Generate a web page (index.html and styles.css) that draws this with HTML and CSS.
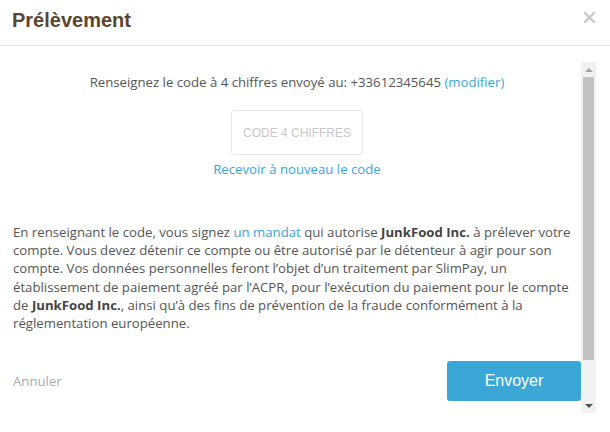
FILE: index.html
```html
<!DOCTYPE html>
<html lang="fr">
<head>
<meta charset="utf-8">
<title>Prélèvement</title>
<link rel="stylesheet" href="styles.css">
</head>
<body>
<div class="modal">
  <div class="header">
    <h1 class="title">Prélèvement</h1>
    <svg class="close" width="11" height="11" viewBox="0 0 11 11"><path d="M1 1L10 10M10 1L1 10" stroke="#c9c9c9" stroke-width="2.4" stroke-linecap="square"/></svg>
  </div>
  <div class="main">
    <div class="content">
      <p class="intro">Renseignez le code à 4 chiffres envoyé au: +33612345645 <a class="link">(modifier)</a></p>
      <div class="code-wrap"><div class="code">CODE 4 CHIFFRES</div></div>
      <p class="resend"><a class="link">Recevoir à nouveau le code</a></p>
      <p class="legal">En renseignant le code, vous signez <a class="link">un mandat</a> qui autorise <b>JunkFood Inc.</b> à prélever votre compte. Vous devez détenir ce compte ou être autorisé par le détenteur à agir pour son compte. Vos données personnelles feront l’objet d’un traitement par SlimPay, un établissement de paiement agréé par l’ACPR, pour l’exécution du paiement pour le compte de <b>JunkFood Inc.</b>, ainsi qu’à des fins de prévention de la fraude conformément à la réglementation européenne.</p>
      <div class="footer">
        <span class="cancel">Annuler</span>
        <button class="send">Envoyer</button>
      </div>
    </div>
    <div class="scrollbar">
      <div class="arrow"><span class="tri-up"></span></div>
      <div class="track"><div class="thumb"></div></div>
      <div class="arrow"><span class="tri-down"></span></div>
    </div>
  </div>
</div>
</body>
</html>
```
FILE: styles.css
```css
html, body {
  margin: 0;
  padding: 0;
  background: #fff;
}
body {
  font-family: "Open Sans", "DejaVu Sans", sans-serif;
  font-size: 13.2px;
  color: #555;
}
.modal {
  width: 610px;
  height: 432px;
  overflow: hidden;
}
.header {
  height: 45px;
  border-bottom: 1px solid #e5e5e5;
  display: flex;
  align-items: center;
  justify-content: space-between;
  padding: 0 15px 0 12px;
}
.title {
  margin: 0;
  font-family: "Liberation Sans", Arial, sans-serif;
  font-weight: bold;
  font-size: 20px;
  color: #5a4630;
  position: relative;
  top: -2px;
}
.close {
  display: block;
  position: relative;
  top: -5px;
}
.main {
  display: flex;
  margin-top: 16px;
  height: 351px;
  padding-left: 13px;
}
.content {
  flex: 1;
  overflow: hidden;
}
p {
  margin: 0;
  line-height: 18px;
}
.intro {
  text-align: center;
  padding-top: 11px;
}
.link {
  color: #3aa5d8;
  text-decoration: none;
}
.code-wrap {
  display: flex;
  justify-content: center;
  margin-top: 19px;
}
.code {
  width: 130px;
  height: 43px;
  border: 1px solid #e8e8e8;
  border-radius: 3px;
  display: flex;
  align-items: center;
  justify-content: center;
  font-family: "Liberation Sans", Arial, sans-serif;
  font-size: 12px;
  color: #c8c8c8;
}
.resend {
  text-align: center;
  margin-top: 5px;
}
.legal {
  margin-top: 45px;
  line-height: 18.2px;
}
.legal b {
  color: #444;
  font-weight: 700;
}
.footer {
  margin-top: 29px;
  display: flex;
  align-items: center;
  justify-content: space-between;
}
.cancel {
  color: #aaa;
}
.send {
  width: 134px;
  height: 40px;
  border: none;
  border-radius: 3px;
  background: #3aa7d7;
  color: #fff;
  font-family: "Liberation Sans", Arial, sans-serif;
  font-size: 16px;
  padding: 0;
}
.scrollbar {
  width: 15px;
  margin-right: 14px;
  background: #f1f1f1;
  display: flex;
  flex-direction: column;
}
.arrow {
  height: 15px;
  display: flex;
  align-items: center;
  justify-content: center;
}
.tri-up {
  width: 0;
  height: 0;
  border-left: 4px solid transparent;
  border-right: 4px solid transparent;
  border-bottom: 4px solid #a3a3a3;
}
.tri-down {
  width: 0;
  height: 0;
  border-left: 4px solid transparent;
  border-right: 4px solid transparent;
  border-top: 4px solid #505050;
}
.track {
  flex: 1;
  padding: 0 2px;
}
.thumb {
  height: 283px;
  background: #c1c1c1;
}
```
